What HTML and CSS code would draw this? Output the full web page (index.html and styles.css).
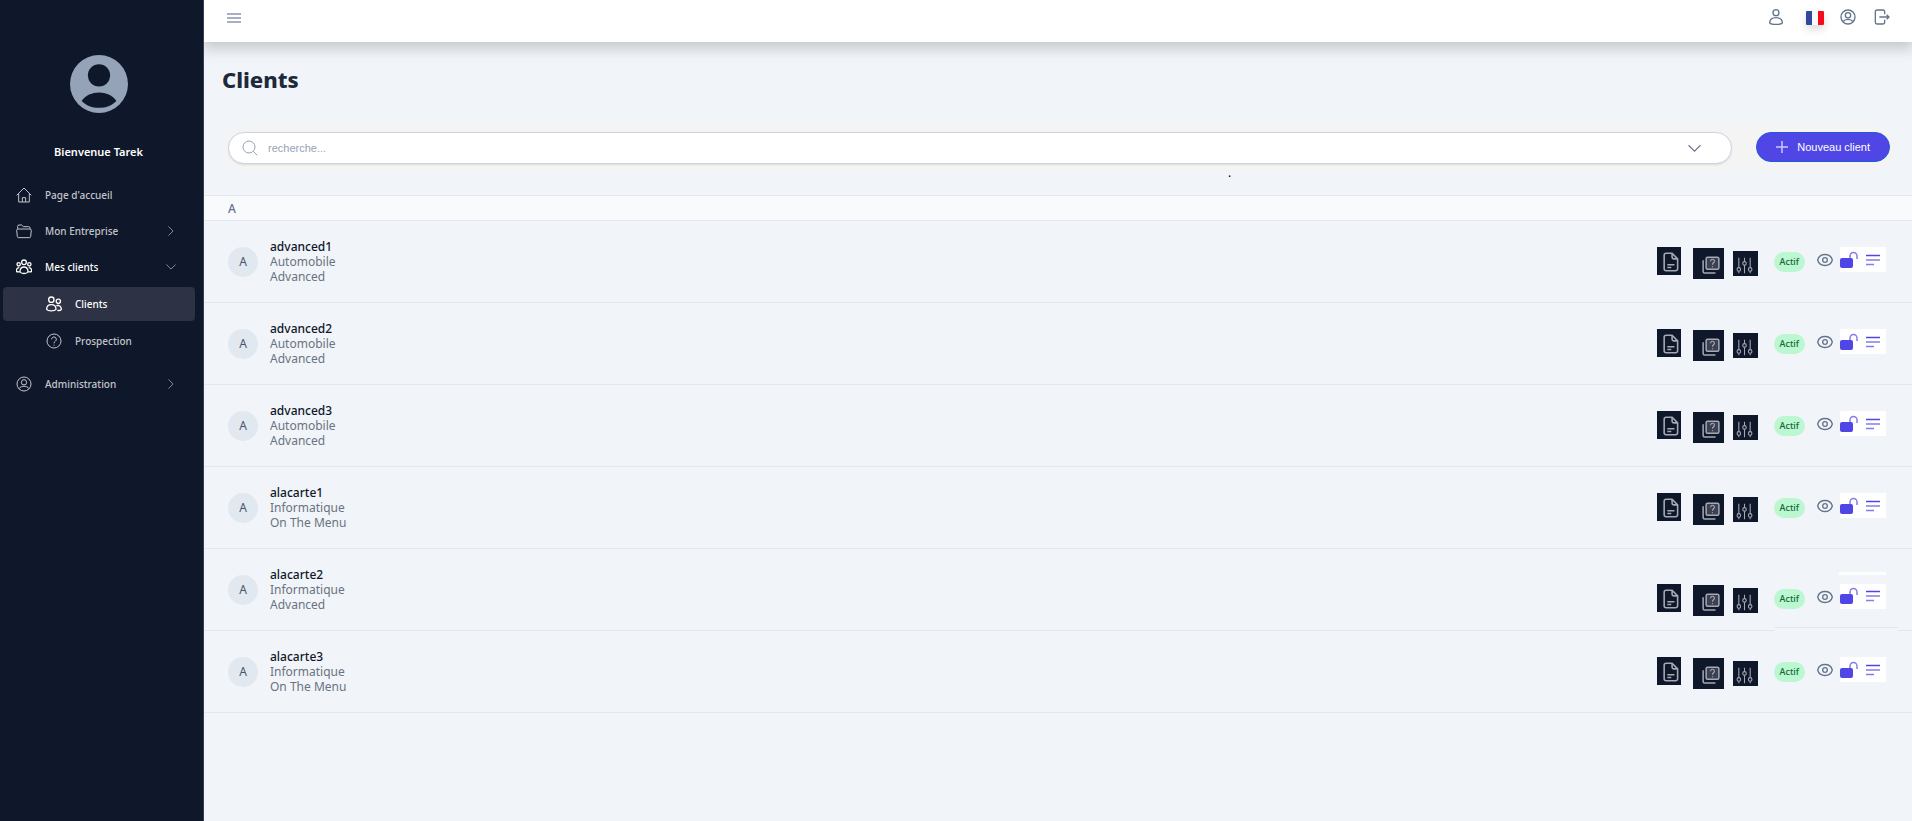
FILE: index.html
```html
<!DOCTYPE html>
<html lang="fr">
<head>
<meta charset="utf-8" />
<title>Clients</title>
<link rel="stylesheet" href="styles.css">
</head>
<body>
  <!-- icones partagees -->
  <svg class="sprite" aria-hidden="true">
    <symbol id="i-home" viewBox="0 0 24 24"><path d="M1 12.5 12 1.5l11 11M4 10v12.5h16V10M9.5 22.5V16h5v6.5"/></symbol>
    <symbol id="i-folder" viewBox="0 0 24 24"><path d="M2.5 8.500V5a2 2 0 0 1 2-2h4l2.500 2.500H19a2 2 0 0 1 2 2v1M3 9h18a2 2 0 0 1 2 2l-1 9a2 2 0 0 1-2 2H4a2 2 0 0 1-2-2l-1-9a2 2 0 0 1 2-2z"/></symbol>
    <symbol id="i-group" viewBox="0 0 24 24"><circle cx="12" cy="5" r="3.500"/><circle cx="4" cy="8" r="2.500"/><circle cx="20" cy="8" r="2.500"/><path d="M6 19.500c0-5 2.500-7.500 6-7.500s6 2.500 6 7.500c-2 3-10 3-12 0zM5 13c-3 0-4.500 2-4.500 5.500 1 1 3 1 4.500.5M19 13c3 0 4.500 2 4.500 5.500-1 1-3 1-4.500.5"/></symbol>
    <symbol id="i-users" viewBox="0 0 24 24"><circle cx="8" cy="5.500" r="4"/><circle cx="18.500" cy="8" r="3.200"/><path d="M1 20c0-5 3-7 7-7s7 2 7 7c-2 3-12 3-14 0zM15.500 14.500c4-1 7.500.5 7.500 5.500-1 1.500-4 2-6 1.500"/></symbol>
    <symbol id="i-help" viewBox="0 0 24 24"><circle cx="12" cy="12" r="10.500"/><path d="M8.500 9.500a3.500 3.500 0 1 1 5.500 2.800c-1.300.9-2 1.500-2 3.200M12 17.500v1.500"/></symbol>
    <symbol id="i-account" viewBox="0 0 24 24"><circle cx="12" cy="12" r="10.500"/><circle cx="12" cy="9.500" r="4"/><path d="M4.500 19c2-3 4.500-3.500 7.500-3.500s5.500.5 7.500 3.500"/></symbol>
    <symbol id="i-user" viewBox="0 0 24 24"><circle cx="12" cy="5.500" r="4.500"/><path d="M2.500 21c0-5.500 4.500-8 9.500-8s9.500 2.500 9.500 8c-3 3-16 3-19 0z"/></symbol>
    <symbol id="i-logout" viewBox="0 0 24 24"><path d="M16 8V4a2.500 2.500 0 0 0-2.500-2.500h-9A2.500 2.500 0 0 0 2 4v16a2.500 2.500 0 0 0 2.500 2.500h9A2.500 2.500 0 0 0 16 20v-4M8 12h14.500M19 8.500l3.500 3.500-3.500 3.500"/></symbol>
    <symbol id="i-right" viewBox="0 0 24 24"><path d="m6 1 11 11L6 23"/></symbol>
    <symbol id="i-down" viewBox="0 0 24 24"><path d="m1 6 11 11L23 6"/></symbol>
    <symbol id="i-search" viewBox="0 0 24 24"><circle cx="10.500" cy="10.500" r="9"/><path d="m17 17 6 6"/></symbol>
    <symbol id="i-doc" viewBox="0 0 24 24"><path d="M4 3.500A2.500 2.500 0 0 1 6.500 1H14l7 7v12.500a2.500 2.500 0 0 1-2.500 2.500h-12A2.500 2.500 0 0 1 4 20.500zM14 1v5a2 2 0 0 0 2 2h5M8 15.500h9M8 19h5"/></symbol>
    <symbol id="i-quiz" viewBox="0 0 24 24"><path class="shade" d="M6 2h16v16H6z"/><path d="M7.500 1.500h13a2 2 0 0 1 2 2v12a2 2 0 0 1-2 2h-13a2 2 0 0 1-2-2v-12a2 2 0 0 1 2-2zM1.500 5.500v15a2 2 0 0 0 2 2h14.500"/><path class="thin" d="M11.500 7c0-3.500 5-3.500 5 0 0 2-2.500 2-2.500 4.500M14 13.500V15"/></symbol>
    <symbol id="i-sliders" viewBox="0 0 24 24"><path d="M4 1v14M4 20v3M12 1v5.500M12 11.500V23M20 1v14M20 20v3"/><circle cx="4" cy="17.500" r="2.500"/><circle cx="12" cy="9" r="2.500"/><circle cx="20" cy="17.500" r="2.500"/></symbol>
    <symbol id="i-eye" viewBox="0 0 24 24"><path d="M1 12c3-11 19-11 22 0-3 11-19 11-22 0z"/><circle cx="12" cy="12" r="3.500"/></symbol>
    <symbol id="i-lock" viewBox="0 0 18 18"><rect class="solid" x="0" y="7" width="13" height="10" rx="2"/><path class="soft" d="M10 7V5a3.500 3.500 0 0 1 7 0V8"/></symbol>
    <symbol id="i-lines" viewBox="0 0 14 14"><path d="M0 2.500h14"/><path class="soft" d="M0 7h14M0 11.500h8"/></symbol>
  </svg>

  <div class="app">
    <aside class="sidebar">
      <div class="profile">
        <svg class="avatar" viewBox="0 0 60 60"><circle class="disc" cx="30" cy="30" r="30"/><circle class="hole" cx="30" cy="21" r="11.500"/><path class="hole" d="M12 47.500C20 36 40 36 48 47.500 39 57 21 57 12 47.500z"/></svg>
        <p>Bienvenue Tarek</p>
      </div>
      <nav class="menu">
        <a href="#"><svg class="icon"><use href="#i-home"/></svg>Page d'accueil</a>
        <a href="#"><svg class="icon"><use href="#i-folder"/></svg>Mon Entreprise<svg class="chevron"><use href="#i-right"/></svg></a>
        <a href="#" class="open"><svg class="icon"><use href="#i-group"/></svg>Mes clients<svg class="chevron"><use href="#i-down"/></svg></a>
        <div class="submenu">
          <a href="#" class="active"><svg class="icon"><use href="#i-users"/></svg>Clients</a>
          <a href="#"><svg class="icon"><use href="#i-help"/></svg>Prospection</a>
        </div>
        <a href="#"><svg class="icon"><use href="#i-account"/></svg>Administration<svg class="chevron"><use href="#i-right"/></svg></a>
      </nav>
    </aside>

    <div class="content">
      <header class="topbar">
        <button type="button" class="burger" aria-label="Menu"><span></span><span></span><span></span></button>
        <div class="tools">
          <button type="button" aria-label="Utilisateur"><svg class="icon"><use href="#i-user"/></svg></button>
          <button type="button" class="flag" aria-label="Langue"></button>
          <button type="button" aria-label="Compte"><svg class="icon"><use href="#i-account"/></svg></button>
          <button type="button" aria-label="Quitter"><svg class="icon"><use href="#i-logout"/></svg></button>
        </div>
      </header>

      <main>
        <h1>Clients</h1>
        <div class="filters">
          <div class="search">
            <svg class="icon"><use href="#i-search"/></svg>
            <input type="text" placeholder="recherche..." aria-label="recherche" />
            <svg class="arrow"><use href="#i-down"/></svg>
          </div>
          <button type="button" class="new"><svg viewBox="0 0 12 12"><path d="M6 0v12M0 6h12"/></svg>Nouveau client</button>
        </div>
        <p class="dot">.</p>

        <h2 class="letter">A</h2>
        <ul class="clients" id="clients"></ul>
      </main>
    </div>
  </div>
  <script src="script.js"></script>
</body>
</html>
```
FILE: styles.css
```css
*{
  box-sizing:border-box;
  margin:0;
  padding:0;
}
body{
  font-family:"Noto Sans","Open Sans",sans-serif;
  font-size:12px;
  line-height:15px;
  color:#1e293b;
  background:#f1f5f9;
}
a{
  color:inherit;
  text-decoration:none;
}
button{
  border:0;
  background:none;
  color:inherit;
  font:inherit;
  cursor:pointer;
}
svg{
  display:block;
  flex:none;
  fill:none;
  stroke:currentColor;
  stroke-width:1.5;
}
.solid{
  fill:currentColor;
  stroke:none;
}
.shade{
  fill:#3b4152;
  stroke:none;
}
.thin{
  stroke-width:1.5;
}
.soft{
  opacity:.7;
}
.sprite{
  position:absolute;
  width:0;
  height:0;
}
.icon{
  width:16px;
  height:16px;
}
.app{
  display:flex;
  min-height:100vh;
}

/* menu de gauche */
.sidebar{
  width:204px;
  flex:none;
  background:#0f172a;
  border-right:1px solid #334155;
  color:#c3c5ca;
}
.profile{
  display:flex;
  flex-direction:column;
  align-items:center;
  gap:31px;
  padding:55px 6px 0 0;
  font-size:11px;
  font-weight:600;
  line-height:16px;
  color:#fff;
}
.avatar{
  width:58px;
  height:58px;
  stroke:none;
}
.avatar .disc{
  fill:#94a3b8;
}
.avatar .hole{
  fill:#0f172a;
}
.menu{
  padding:17px 8px 0 3px;
  font-size:10px;
  font-weight:500;
}
.menu a{
  display:flex;
  align-items:center;
  gap:13px;
  height:36px;
  padding:0 19px 0 13px;
  border-radius:4px;
}
.menu .chevron{
  width:10px;
  height:10px;
  margin-left:auto;
  stroke-width:2;
  color:#94a3b8;
}
.menu .open,
.menu .active{
  color:#fff;
}
.menu .open .icon,
.menu .active .icon{
  stroke-width:2;
}
.menu .submenu{
  padding:2px 0 7px;
}
.menu .submenu a{
  padding-left:43px;
}
.menu .submenu .active{
  height:34px;
  margin-bottom:2px;
  background:#2d3345;
}

/* barre du haut */
.content{
  flex:1;
  min-width:0;
}
.topbar{
  display:flex;
  justify-content:space-between;
  height:42px;
  padding:9px 22px 0 23px;
  background:#fff;
  box-shadow:0 4px 14px 2px rgba(0,0,0,.2);
  clip-path:inset(0 0 -24px 0);
}
.burger{
  display:flex;
  flex-direction:column;
  gap:2px;
  width:14px;
  padding-top:4px;
}
.burger span{
  width:14px;
  height:2px;
  background:#a9aec4;
}
.tools{
  display:flex;
  align-items:flex-start;
  gap:18px;
  color:#64748b;
  stroke-width:2;
}
.tools .icon{
  stroke-width:2;
}
.tools .flag{
  width:18px;
  height:14px;
  margin:2px -2px 0 4px;
  border-radius:1px;
  background:linear-gradient(90deg,#3346a0 33%,#f8fafc 33% 67%,#f60a1c 67%);
  box-shadow:0 4px 8px rgba(0,0,0,.15);
}

/* page */
h1{
  padding:20px 18px 0;
  font-size:22px;
  line-height:34px;
  font-weight:800;
}
.filters{
  display:flex;
  gap:24px;
  margin:29px 16px 0 18px;
  padding:7px 6px;
  border-radius:24px;
  background:#f4f4f4;
}
.search{
  display:flex;
  flex:1;
  align-items:center;
  height:32px;
  padding:0 30px 0 13px;
  border:1px solid #cbd5e1;
  border-radius:16px;
  background:#fff;
  box-shadow:0 1px 2px rgba(0,0,0,.1);
  color:#94a3b8;
}
.search input{
  flex:1;
  padding:0 10px;
  border:0;
  outline:0;
  background:none;
  font:11px "Liberation Sans",Arial,sans-serif;
}
.search input::placeholder{
  color:#94a3b8;
}
.search .arrow{
  width:13px;
  height:13px;
  stroke-width:2;
  color:#64748b;
}
.new{
  display:flex;
  align-items:center;
  gap:9px;
  height:30px;
  padding:0 19px;
  border:1px solid #1d5bd8;
  border-radius:15px;
  background:#4f46e5;
  color:#fff;
  font:11px "Liberation Sans",Arial,sans-serif;
}
.new svg{
  width:12px;
  height:12px;
  opacity:.7;
}
.dot{
  height:24px;
  padding-left:1024px;
  line-height:3px;
  color:#000;
}
.letter{
  padding:5px 24px 4px;
  border:solid #e2e8f0;
  border-width:1px 0;
  background:#f8fafc;
  font-size:12px;
  font-weight:500;
  line-height:15px;
  color:#64748b;
}
.clients{
  list-style:none;
}
.client{
  position:relative;
  display:flex;
  align-items:center;
  gap:12px;
  height:82px;
  padding:0 26px 0 24px;
  border-bottom:1px solid #e2e8f0;
}
/* bord decale sous les actions */
.client.raised::after{
  content:"";
  position:absolute;
  right:14px;
  bottom:-1px;
  width:123px;
  height:3px;
  border-top:1px solid #e2e8f0;
  background:#f1f5f9;
}
.initial{
  width:30px;
  height:30px;
  border-radius:50%;
  background:#e2e8f0;
  line-height:30px;
  text-align:center;
  color:#475569;
}
.infos{
  flex:1;
  color:#6b7280;
}
.infos b{
  display:block;
  font-weight:500;
  color:#0f172a;
}
.side{
  display:flex;
  flex-direction:column;
  align-items:flex-end;
  gap:6px;
}
.strip{
  width:47px;
  height:3px;
  margin-top:8px;
  background:#fff;
}
.actions{
  display:flex;
  align-items:flex-start;
  padding-top:3px;
}
.tile{
  display:grid;
  place-items:end;
  background:#0f172a;
  color:#a6a9b2;
}
.tile-doc{
  width:24px;
  height:28px;
  padding:0 1px 3px 0;
}
.tile-doc svg{
  width:19px;
  height:20px;
  stroke-width:2;
}
.tile-quiz{
  width:31px;
  height:31px;
  margin:1px 9px 0 12px;
  padding:0 4px 5px 0;
}
.tile-quiz svg{
  width:18px;
  height:18px;
  stroke-width:2;
}
.tile-sliders{
  width:25px;
  height:25px;
  margin-top:4px;
  padding:0 5px 2px 0;
}
.tile-sliders svg{
  width:17px;
  height:17px;
}
.badge{
  height:20px;
  margin:5px 12px 0 16px;
  padding:0 6px;
  border-radius:10px;
  background:#bbf7d0;
  font-size:9px;
  font-weight:500;
  line-height:19px;
  color:#166534;
}
.eye{
  height:26px;
  margin-right:7px;
  color:#64748b;
}
.eye svg{
  stroke-width:2;
}
.box{
  display:flex;
  align-items:center;
  gap:8px;
  height:25px;
  padding-right:6px;
  background:#fff;
  color:#4f46e5;
}
.box .lock svg{
  width:18px;
  height:18px;
}
.box .lines svg{
  width:14px;
  height:14px;
}
```
FILE: script.js
```js
var clients=[
  ["advanced1","Automobile","Advanced"],
  ["advanced2","Automobile","Advanced"],
  ["advanced3","Automobile","Advanced"],
  ["alacarte1","Informatique","On The Menu"],
  ["alacarte2","Informatique","Advanced",true],
  ["alacarte3","Informatique","On The Menu"]
];
function bouton(classe,icone,nom){
  return '<button type="button" class="'+classe+'" aria-label="'+nom+'"><svg class="icon"><use href="#i-'+icone+'"/></svg></button>';
}
var html="";
for(var i=0;i<clients.length;i++){
  var c=clients[i];
  html+='<li class="client'+(c[3]?' raised':'')+'"><span class="initial">A</span>'
    +'<div class="infos"><b>'+c[0]+'</b><p>'+c[1]+'</p><p>'+c[2]+'</p></div>'
    +'<div class="side">'+(c[3]?'<div class="strip"></div>':'')
    +'<div class="actions">'
    +bouton("tile tile-doc","doc","Documents")
    +bouton("tile tile-quiz","quiz","Questions")
    +bouton("tile tile-sliders","sliders","Options")
    +'<span class="badge">Actif</span>'
    +bouton("eye","eye","Voir")
    +'<div class="box">'+bouton("lock","lock","Verrou")+bouton("lines","lines","Details")+'</div>'
    +'</div></div></li>';
}
document.getElementById("clients").innerHTML=html;
```
